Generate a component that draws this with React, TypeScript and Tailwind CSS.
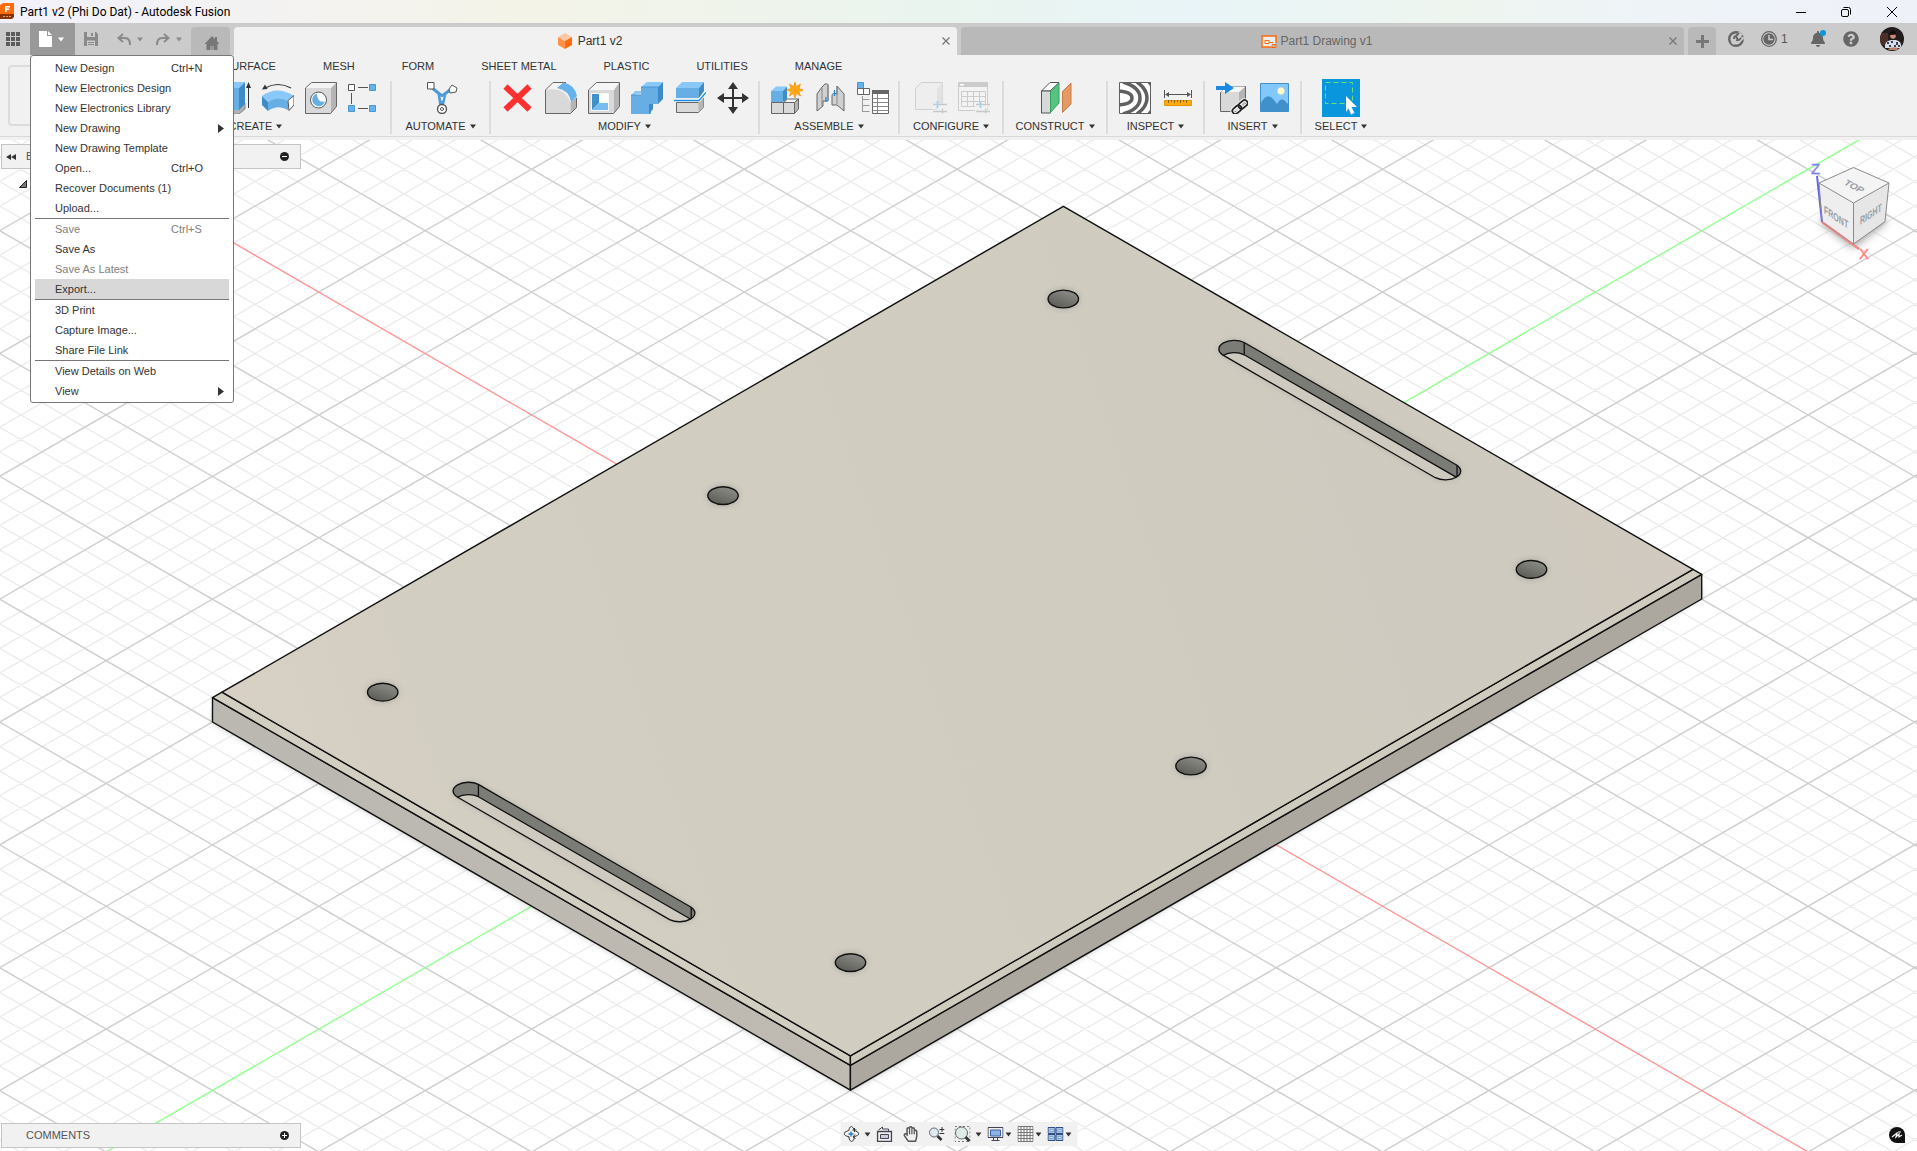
import React from 'react';
import { FaBell, FaQuestionCircle, FaRegHandPaper } from 'react-icons/fa';

type IconProps = { children: React.ReactNode; className?: string; size?: number };

const Icon: React.FC<IconProps> = ({ children, className = 'w-8 h-8', size = 32 }) => (
  <svg viewBox={`0 0 ${size} ${size}`} className={`${className} shrink-0`} fill="none" aria-hidden="true">
    {children}
  </svg>
);

const Caret: React.FC<{ className?: string }> = ({ className = 'text-[#333]' }) => (
  <svg viewBox="0 0 6 5" className={`w-[6px] h-[5px] shrink-0 ${className}`} aria-hidden="true">
    <path d="M0 .5h6L3 4.5z" fill="currentColor" />
  </svg>
);

/* ---------- ribbon icons ---------- */

const ExtrudeIcon = () => (
  <Icon>
    <path d="M2 26h18l6-5v6l-6 5H2z" fill="#b0b0b0" stroke="#888" />
    <path d="M2 6l6-6h18l-6 6z" fill="#88c8fb" />
    <path d="M2 6h18v22H2z" fill="#66aee4" />
    <path d="M20 6l6-6v22l-6 6z" fill="#3d8bc7" />
    <path d="M29.5 26V3" stroke="#333" />
    <path d="M29.5 0l2.500 6h-5z" fill="#333" />
  </Icon>
);

const SweepIcon = () => (
  <Icon>
    <path d="M3 6Q16-1 29 6" stroke="#333" strokeWidth="1.2" />
    <path d="M0 7.500l3-5 2.500 4.500z" fill="#333" />
    <path d="M0 14Q15 3 32 14l-6 5Q16 13 6 20z" fill="#88c8fb" />
    <path d="M0 14l6 6v9l-6-6z" fill="#3d8bc7" />
    <path d="M6 20q10-7 20-1v9q-10-6-20 1z" fill="#66aee4" />
    <path d="M26 18.500l6-5v9.500l-5 5.500z" fill="#fff" stroke="#555" />
  </Icon>
);

const HoleIcon = () => (
  <Icon>
    <path d="M.5 6l6-5.500h25L26 6z" fill="#f4f4f4" />
    <path d="M26 6l5.500-5.500v24L26 31.500z" fill="#b5b5b5" />
    <path d="M.5 6H26v25.500H.5z" fill="#d9d9d9" />
    <path d="M.5 6L6.500.5h25v24l-6 7H.5z" stroke="#666" />
    <circle cx="13.500" cy="18" r="8" fill="#fff" stroke="#555" />
    <path d="M12 11.500a6.500 6.500 0 1 0 8 8Q12 21 12 11.500z" fill="#66aee4" />
  </Icon>
);

const PatternIcon = () => (
  <Icon>
    <path d="M10 5.500h10M10 26.500h10M3.500 11v11" stroke="#555" />
    <path d="M.5 2.500h6v6h-6z" fill="#fff" stroke="#555" />
    <path d="M21.500 2.500h6v6h-6zM.5 23.500h6v6h-6zM21.500 23.500h6v6h-6z" fill="#66b2ea" stroke="#4a96d0" />
  </Icon>
);

const AutomateIcon = () => (
  <Icon>
    <path d="M5 5l11 9 8-6M13 12l2 13M19 12l-3 13" stroke="#4d9bd6" strokeWidth="3" />
    <path d="M13.500 13.500l2.500 8 2.500-8-2.500 1.500z" fill="#fff" stroke="#4d9bd6" />
    <path d="M1.500.5h6.500v6.500H1.500z" fill="#fff" stroke="#555" />
    <path d="M26 3l5 3-1 4-6 1-1-4z" fill="#fff" stroke="#555" />
    <circle cx="16" cy="27" r="4.500" fill="#fff" stroke="#555" strokeWidth="1.400" />
    <circle cx="16" cy="27" r="1.500" stroke="#555" />
  </Icon>
);

const DeleteIcon = () => (
  <Icon>
    <path d="M3.500 4.500l24 23M27.500 4.500l-24 23" stroke="#ff3030" strokeWidth="6" />
  </Icon>
);

const FilletIcon = () => (
  <Icon>
    <path d="M.5 8L8 .5h10L12 7z" fill="#f4f4f4" />
    <path d="M.5 31.500V8Q20 4 25.500 21v10.500z" fill="#d9d9d9" />
    <path d="M25.500 20l6-5v11l-6 5.500z" fill="#b5b5b5" />
    <path d="M.5 31.500V8L8 .5h13M.5 31.500h25l6-6V16" stroke="#666" />
    <path d="M12 6l6.500-5.500Q30 3 32 14l-6 6Q24 8 12 6z" fill="#66b2ea" />
  </Icon>
);

const ShellIcon = () => (
  <Icon>
    <path d="M.5 8l8-7.500h23L26 8z" fill="#f6f6f6" />
    <path d="M26 8l5.500-7.500v24L26 31.500z" fill="#b5b5b5" />
    <path d="M.5 8H26v23.500H.5z" fill="#d9d9d9" />
    <path d="M.5 8l8-7.500h23v24l-6 7H.5z" stroke="#666" />
    <path d="M3 11h18v18H3z" fill="#f6f6f6" />
    <path d="M4 12h7v9l-7 7z" fill="#4090cc" />
    <path d="M4 28l7-7h9v7z" fill="#78bdf2" />
    <path d="M11 12h9v9h-9z" fill="#fff" />
  </Icon>
);

const CombineIcon = () => (
  <Icon>
    <path d="M0 13.500L4 9h6V5l6-5h16l-5 5-11 5z" fill="#88c8fb" />
    <path d="M0 13h10V5h17v17h-7v10H0z" fill="#66aee4" />
    <path d="M27 5l5-5v17l-5 5zM18 32l4-5v-5h-4z" fill="#3d8bc7" />
    <path d="M10 5h17M0 13h10" stroke="#4a96d0" />
  </Icon>
);

const SplitIcon = () => (
  <Icon>
    <path d="M2 6l6-6h22l-5 6z" fill="#88c8fb" />
    <path d="M2 6h23v10H2z" fill="#66aee4" />
    <path d="M25 6l5-6v9l-5 7z" fill="#3d8bc7" />
    <path d="M2.500 20.500h22l5-5v10l-5 5h-22z" fill="#d9d9d9" stroke="#666" />
    <path d="M24.500 20.500l5-5v10l-5 5z" fill="#b5b5b5" />
    <path d="M0 18.500h25l7-8" stroke="#fff" strokeWidth="3" />
    <path d="M0 18.500h25l7-8" stroke="#1a8ae6" strokeWidth="1.300" />
  </Icon>
);

const MoveIcon = () => (
  <Icon>
    <path d="M16 5v22M5 16h22" stroke="#333" strokeWidth="2" />
    <path d="M16 0l5 7H11zM16 32l5-7H11zM0 16l7-5v10zM32 16l-7-5v10z" fill="#333" />
  </Icon>
);

const NewComponentIcon = () => (
  <Icon>
    <path d="M0 9l5-4.500h11V16H0z" fill="#88c8fb" />
    <path d="M0 9h12v11H0z" fill="#66aee4" />
    <path d="M12 9l4-4v12l-4 3z" fill="#3d8bc7" />
    <path d="M.5 20.500h12v11H.5zM12.500 20.500h11v11h-11z" fill="#d9d9d9" stroke="#666" />
    <path d="M12.500 20.500l4-3.500h11l-4 3.500z" fill="#f6f6f6" stroke="#666" />
    <path d="M23.500 20.500l4-3.500v10l-4 4.500z" fill="#b5b5b5" stroke="#666" />
    <path d="M24 0l1.500 4.500L29.500 2l-1.500 4.500 4.500 1.500-4.500 1.500 1.500 4.500-4-2.500L24 16l-1.500-4.500-4 2.500 1.500-4.500L15.500 8 20 6.500 18.500 2l4 2.500z" fill="#ffa813" stroke="#f08a00" strokeWidth=".6" />
  </Icon>
);

const JointIcon = () => (
  <Icon>
    <path d="M3 12l5-7 3-3q4-1 3 3v14H9v5l-6 5z" fill="#d0d0d0" stroke="#666" />
    <path d="M8 6v18M14 3v16" stroke="#888" />
    <path d="M30 12l-7-8v8q-5-2-5 2v9h5l7 6z" fill="#d0d0d0" stroke="#666" />
    <path d="M23 4v18" stroke="#888" />
    <path d="M12 15v5M20.500 8v6" stroke="#1a8ae6" strokeWidth="1.300" />
  </Icon>
);

const BomIcon = () => (
  <Icon>
    <path d="M.5.5h6v6h-6z" fill="#66b2ea" stroke="#4a96d0" />
    <path d="M.5 6.500h6v6h-6zM6.500 6.500h6v6h-6z" fill="#fff" stroke="#666" />
    <path d="M5.500 14v16M5.500 17.500h7M5.500 23.500h7M5.500 29.500h7" stroke="#999" />
    <path d="M15.500 8.500h16v23h-16z" fill="#fff" stroke="#666" />
    <path d="M15 8h17v4H15z" fill="#666" />
    <path d="M15.500 16.500h16M15.500 20.500h16M15.500 24.500h16M15.500 28.500h16M20.500 12v19" stroke="#888" />
  </Icon>
);

const Sliders = () => (
  <>
    <path d="M17 23.500h15M17 29.500h15" stroke="#f1f1f1" strokeWidth="4" />
    <path d="M18 22.500h14M18 29.500h14M27.500 26.500v5" stroke="#c8c8c8" strokeWidth="1.300" />
    <path d="M22.500 19v7" stroke="#a8d4f4" strokeWidth="2" />
  </>
);

const ConfigureIcon = () => (
  <Icon>
    <path d="M.5 6.500l6-6h21v21l-6 6h-21z" fill="#eee" stroke="#d0d0d0" />
    <path d="M22 6.500l5.500-6v21l-5.500 6z" fill="#e2e2e2" />
    <Sliders />
  </Icon>
);

const ConfigTableIcon = () => (
  <Icon>
    <path d="M.5.500h29v28h-29z" fill="#f3f3f3" stroke="#ccc" />
    <path d="M0 0h30v5H0z" fill="#ccc" />
    <path d="M2 2h4v1.500H2z" fill="#fff" />
    <path d="M3.500 9.500h24v15h-24zM3.500 14.500h24M3.500 19.500h24M9.500 9.500v15M15.500 9.500v15M21.500 9.500v15" stroke="#ccc" />
    <Sliders />
  </Icon>
);

const ConstructIcon = () => (
  <Icon>
    <path d="M1.500 9L10 .5h9L10 9z" fill="#fff" stroke="#555" />
    <path d="M1.500 9h9v22h-9z" fill="#d9d9d9" stroke="#555" />
    <path d="M10.500 10L19 1v20l-8.500 9.500z" fill="#58c280" stroke="#2ea35d" />
    <path d="M22.500 9.500L31 1v21l-8.500 8.500z" fill="#e59a66" stroke="#c77c48" />
  </Icon>
);

const ZebraIcon = () => (
  <Icon>
    <path d="M.5.5h31v31H.5z" fill="#fff" />
    <path d="M0 9q13 1 13 7t-13 7M4 0q17 5 17 16T4 32M18 0q10 7 10 16t-10 16M30 0q3 3 3 5M30 32q3-3 3-5" stroke="#606060" strokeWidth="3.500" />
    <path d="M.5.5h31v31H.5z" stroke="#606060" />
  </Icon>
);

const MeasureIcon = () => (
  <Icon>
    <path d="M2.500 8v8M29.500 8v8M4 12.500h24" stroke="#555" />
    <path d="M3 12.500l4-2.500v5zM29 12.500l-4-2.500v5z" fill="#555" />
    <path d="M2.500 18.500h27v5h-27z" fill="#ffab0f" stroke="#e69500" />
    <path d="M6.500 18v3M9.500 18v2M12.500 18v3M15.500 18v2M18.500 18v3M21.500 18v2M24.500 18v3" stroke="#8a6410" />
  </Icon>
);

const InsertIcon = () => (
  <Icon>
    <path d="M4.500 10.500l7-6h18v18l-6 7h-19z" fill="#d9d9d9" stroke="#666" />
    <path d="M5 10l6-5.500h18l-6 5.500z" fill="#f6f6f6" />
    <path d="M23 10.500l6-5.500v17l-6 7z" fill="#b5b5b5" />
    <path d="M0 4h9V0l9 6-9 6V8H0z" fill="#1a8ae6" />
    <g transform="rotate(-40 24 25)">
      <rect x="15" y="22" width="10" height="6" rx="3" stroke="#f1f1f1" strokeWidth="4" />
      <rect x="23" y="22" width="10" height="6" rx="3" stroke="#f1f1f1" strokeWidth="4" />
      <rect x="15" y="22" width="10" height="6" rx="3" stroke="#222" strokeWidth="1.700" />
      <rect x="23" y="22" width="10" height="6" rx="3" stroke="#222" strokeWidth="1.700" />
    </g>
  </Icon>
);

const ImageIcon = () => (
  <Icon>
    <path d="M1.500 1.500h28v28h-28z" fill="#83c8fd" stroke="#4090cc" />
    <circle cx="22" cy="9" r="3.500" fill="#fff9cf" stroke="#e8dfa0" strokeWidth=".5" />
    <path d="M2 21q6-12 13-3l3 4q4-7 8-3l3 3v7H2z" fill="#4090cc" />
  </Icon>
);

const SelectIcon = () => (
  <Icon className="w-[38px] h-[38px]" size={38}>
    <path d="M0 0h38v38H0z" fill="#0a96dc" />
    <path d="M3.500 3.500h27v21h-27z" stroke="#66e07a" strokeDasharray="5 3" />
    <path d="M24 17l11 11h-5.500l3 6-3.500 1.500-2.500-6L24 33z" fill="#fff" />
  </Icon>
);

/* ---------- data ---------- */

type Tool = { name: string; icon: React.ReactNode };
type Group = { label: string; width: string; tools: Tool[] };

const groups: Group[] = [
  {
    label: 'CREATE',
    width: 'w-[271px]',
    tools: [
      { name: 'Extrude', icon: <ExtrudeIcon /> },
      { name: 'Sweep', icon: <SweepIcon /> },
      { name: 'Hole', icon: <HoleIcon /> },
      { name: 'Pattern', icon: <PatternIcon /> },
    ],
  },
  { label: 'AUTOMATE', width: 'w-[99px]', tools: [{ name: 'Automate', icon: <AutomateIcon /> }] },
  {
    label: 'MODIFY',
    width: 'w-[269px]',
    tools: [
      { name: 'Delete', icon: <DeleteIcon /> },
      { name: 'Fillet', icon: <FilletIcon /> },
      { name: 'Shell', icon: <ShellIcon /> },
      { name: 'Combine', icon: <CombineIcon /> },
      { name: 'Split Body', icon: <SplitIcon /> },
      { name: 'Move', icon: <MoveIcon /> },
    ],
  },
  {
    label: 'ASSEMBLE',
    width: 'w-[140px]',
    tools: [
      { name: 'New Component', icon: <NewComponentIcon /> },
      { name: 'Joint', icon: <JointIcon /> },
      { name: 'Bill of Materials', icon: <BomIcon /> },
    ],
  },
  {
    label: 'CONFIGURE',
    width: 'w-[104px]',
    tools: [
      { name: 'Configure', icon: <ConfigureIcon /> },
      { name: 'Configuration Table', icon: <ConfigTableIcon /> },
    ],
  },
  { label: 'CONSTRUCT', width: 'w-[104px]', tools: [{ name: 'Offset Plane', icon: <ConstructIcon /> }] },
  {
    label: 'INSPECT',
    width: 'w-[97px]',
    tools: [
      { name: 'Zebra Analysis', icon: <ZebraIcon /> },
      { name: 'Measure', icon: <MeasureIcon /> },
    ],
  },
  {
    label: 'INSERT',
    width: 'w-[97px]',
    tools: [
      { name: 'Insert Derive', icon: <InsertIcon /> },
      { name: 'Canvas', icon: <ImageIcon /> },
    ],
  },
];

const ribbonTabs = ['SURFACE', 'MESH', 'FORM', 'SHEET METAL', 'PLASTIC', 'UTILITIES', 'MANAGE'];

type MenuEntry = { label: string; shortcut?: string; submenu?: boolean; disabled?: boolean; active?: boolean };

const menuSections: MenuEntry[][] = [
  [
    { label: 'New Design', shortcut: 'Ctrl+N' },
    { label: 'New Electronics Design' },
    { label: 'New Electronics Library' },
    { label: 'New Drawing', submenu: true },
    { label: 'New Drawing Template' },
    { label: 'Open...', shortcut: 'Ctrl+O' },
    { label: 'Recover Documents (1)' },
    { label: 'Upload...' },
  ],
  [
    { label: 'Save', shortcut: 'Ctrl+S', disabled: true },
    { label: 'Save As' },
    { label: 'Save As Latest', disabled: true },
    { label: 'Export...', active: true },
  ],
  [{ label: '3D Print' }, { label: 'Capture Image...' }, { label: 'Share File Link' }],
  [{ label: 'View Details on Web' }, { label: 'View', submenu: true }],
];

/* ---------- title bar ---------- */

const TitleBar = () => (
  <header className="h-[23px] shrink-0 flex items-center bg-[linear-gradient(90deg,#f2f1fa_0%,#f3f2f3_12%,#f4f3e8_27%,#eaf4ee_48%,#e8f4f7_62%,#eef5ef_76%,#eef3f8_86%,#eef2f8_100%)]">
    <svg viewBox="0 0 14 17" className="w-[14px] h-[17px] shrink-0" aria-hidden="true">
      <path d="M0 2l3-2h11v12H0z" fill="#ff6b0b" />
      <path d="M0 11h14v3l-2 2H0z" fill="#8a3304" />
      <path d="M5 9V3h5v1.500H6.800v1h2.500v1.500H6.800V9z" fill="#fff" />
      <path d="M3 13.500h8" stroke="#d9a07c" strokeDasharray="2 1" />
    </svg>
    <h1 className="ml-[6px] text-[12px] leading-4 text-black font-['Roboto','Noto_Sans',sans-serif]">
      Part1 v2 (Phi Do Dat) - Autodesk Fusion
    </h1>
    <div className="ml-auto pr-px flex h-full text-black">
      <button aria-label="Minimize" className="w-[45px] flex items-center justify-center">
        <Icon className="w-[10px] h-[10px]" size={10}><path d="M0 5.500h10" stroke="currentColor" /></Icon>
      </button>
      <button aria-label="Restore" className="w-[45px] flex items-center justify-center">
        <Icon className="w-[10px] h-[10px]" size={10}>
          <rect x=".5" y="2.500" width="7" height="7" rx="1.500" stroke="currentColor" />
          <path d="M2.500.5h5a2 2 0 0 1 2 2v5" stroke="currentColor" />
        </Icon>
      </button>
      <button aria-label="Close window" className="w-[48px] flex items-center justify-center">
        <Icon className="w-[10px] h-[10px]" size={10}><path d="M0 0l10 10M10 0L0 10" stroke="currentColor" /></Icon>
      </button>
    </div>
  </header>
);

/* ---------- document tabs ---------- */

const CloseX = () => (
  <Icon className="w-2 h-2" size={8}><path d="M.5.5l7 7M7.500.5l-7 7" stroke="#777" strokeWidth="1.300" /></Icon>
);

const TabBar = () => (
  <div className="h-8 shrink-0 bg-[#cbcbcb] flex items-stretch">
    <button aria-label="Data panel" className="w-[30px] pl-[6px] flex items-center">
      <Icon className="w-[14px] h-[14px]" size={14}>
        <path d="M0 0h4v4H0zM5 0h4v4H5zM10 0h4v4h-4zM0 5h4v4H0zM5 5h4v4H5zM10 5h4v4h-4zM0 10h4v4H0zM5 10h4v4H5zM10 10h4v4h-4z" fill="#5c5c5c" />
      </Icon>
    </button>
    <button aria-label="File" className="w-[45px] bg-[#999] pl-[9px] flex items-center gap-[6px]">
      <svg viewBox="0 0 13 16" className="w-[13px] h-4" aria-hidden="true">
        <path d="M0 0h8v5h5v11H0zM9 0l4 4H9z" fill="#fff" />
      </svg>
      <Caret className="text-white" />
    </button>
    <div className="w-[116px] pl-[9px] flex items-center text-[#8a8a8a]">
      <button aria-label="Save">
        <Icon className="w-[14px] h-[14px]" size={14}>
          <path d="M0 0h12l2 2v12H0z" fill="#8a8a8a" />
          <path d="M3 0h8v5H3zM3 8.500h8V14H3z" fill="#cbcbcb" />
          <path d="M7 1h2v3H7zM4 10h6v1H4zM4 12h6v1H4z" fill="#8a8a8a" />
        </Icon>
      </button>
      <button aria-label="Undo" className="ml-[19px]">
        <Icon className="w-[14px] h-[14px]" size={14}><path d="M6 2L1.500 6 6 10M2 6h6q5 0 5 7" stroke="currentColor" strokeWidth="2" /></Icon>
      </button>
      <Caret className="ml-[6px] text-[#8a8a8a]" />
      <button aria-label="Redo" className="ml-[13px]">
        <Icon className="w-[14px] h-[14px]" size={14}><path d="M8 2l4.500 4L8 10M12 6H6q-5 0-5 7" stroke="currentColor" strokeWidth="2" /></Icon>
      </button>
      <Caret className="ml-[6px] text-[#8a8a8a]" />
    </div>
    <button aria-label="Home" className="mt-1 w-[39px] shrink-0 rounded-t bg-[#b9b9b9] flex items-center justify-center pl-[3px] pt-[3px]">
      <Icon className="w-[14px] h-[14px]" size={14}>
        <path d="M7 0l3 3V1h2v4l2 2.500V8h-1.500v6H8.500v-4h-3v4h-4V8H0v-.5z" fill="#777" />
        <path d="M6 10h2v4H6z" fill="#999" />
      </Icon>
    </button>
    <div className="mt-1 ml-1 flex-1 rounded-t bg-[#f1f1f1] flex items-center pr-[7px]">
      <a href="#part1" className="flex-1 pl-1 flex items-center justify-center gap-[6px] text-[12px] text-[#333]">
        <svg viewBox="0 0 14 16" className="w-[14px] h-4" aria-hidden="true">
          <path d="M7 0l7 4-7 4-7-4z" fill="#fcc9a4" />
          <path d="M0 4l7 4v8l-7-4z" fill="#ff9248" />
          <path d="M14 4L7 8v8l7-4z" fill="#ff6b0b" />
        </svg>
        Part1 v2
      </a>
      <button aria-label="Close Part1 v2"><CloseX /></button>
    </div>
    <div className="mt-1 ml-1 flex-1 rounded-t bg-[#b9b9b9] flex items-center pr-[7px]">
      <a href="#drawing1" className="flex-1 pl-1 flex items-center justify-center gap-[3px] text-[12px] text-[#666]">
        <svg viewBox="0 0 16 13" className="w-4 h-[13px]" fill="none" aria-hidden="true">
          <path d="M10 12H1V1h14v7" fill="#eee" stroke="#ff6b0b" strokeWidth="1.500" />
          <path d="M4 5.500h4v2h4M4 5.500v3h4M11 9.500h4v3h-4z" stroke="#ff6b0b" />
        </svg>
        Part1 Drawing v1
      </a>
      <button aria-label="Close Part1 Drawing v1"><CloseX /></button>
    </div>
    <button aria-label="New tab" className="mt-1 ml-1 w-7 rounded-t bg-[#b9b9b9] flex items-center justify-center">
      <Icon className="w-[13px] h-[13px]" size={13}><path d="M6.500 0v13M0 6.500h13" stroke="#777" strokeWidth="3" /></Icon>
    </button>
    <div className="w-[201px] flex items-center pl-3 text-[#666]">
      <button aria-label="Extensions">
        <Icon className="w-4 h-4" size={16}>
          <circle cx="8" cy="8" r="6.800" stroke="currentColor" strokeWidth="2.400" />
          <path d="M3 12l3-3q-1-3 1-4l4-4.500 4 3-3 3 1 .5 2.500-2 .5 3-4 3q-2 1-4 0l-2 3z" fill="#cbcbcb" />
          <path d="M6 8q0-3 2-3l3-3M8 9q3 1 5-2M8 6l2 2" stroke="currentColor" strokeWidth="1.800" />
        </Icon>
      </button>
      <button aria-label="Job status" className="ml-[17px] flex items-center gap-1 text-[12px] text-[#555]">
        <Icon className="w-4 h-4" size={16}>
          <circle cx="8" cy="8" r="7.300" stroke="#666" strokeWidth="1.300" />
          <circle cx="8" cy="8" r="5.700" fill="#666" />
          <path d="M8 4v4.500h4" stroke="#cbcbcb" strokeWidth="1.500" />
        </Icon>
        1
      </button>
      <button aria-label="Notifications" className="relative ml-[23px]">
        <FaBell className="w-[14px] h-4" />
        <span className="absolute -top-px -right-px w-[6px] h-[6px] rounded-full bg-[#0a96dc]" />
      </button>
      <button aria-label="Help" className="ml-[18px]">
        <FaQuestionCircle className="w-4 h-4" />
      </button>
      <button aria-label="Account" className="ml-[21px]">
        <svg viewBox="0 0 24 24" className="w-6 h-6" aria-hidden="true">
          <defs><clipPath id="avatar"><circle cx="12" cy="12" r="12" /></clipPath></defs>
          <g clipPath="url(#avatar)">
            <path d="M0 0h24v24H0z" fill="#231c1c" />
            <path d="M0 6h8v12H0z" fill="#4a3028" />
            <path d="M5 21q-1-7 6-8h5q6 1 5 8z" fill="#d8dce4" />
            <path d="M7 15h2v2H7zM11 14h2v2h-2zM16 15h2v3h-2zM9 18h2v2H9zM14 18h2v2h-2zM18 18h2v2h-2z" fill="#39425c" />
            <circle cx="13" cy="9" r="2.800" fill="#c48d75" />
            <path d="M10 8q0-5 3-4.500t3 4z" fill="#100c0c" />
            <path d="M8 22q5-3 10-1l-1 2H9z" fill="#bd8068" />
          </g>
        </svg>
      </button>
    </div>
  </div>
);

/* ---------- ribbon ---------- */

const GroupLabel: React.FC<{ label: string }> = ({ label }) => (
  <button className="flex items-center gap-1 text-[11px] leading-4 text-[#333]">
    {label}
    <Caret />
  </button>
);

const Ribbon = () => (
  <div className="h-[85px] shrink-0 bg-[#f1f1f1] pb-[3px]">
    <div className="h-full flex border-b border-[#d9d9d9]">
      <div className="w-[121px] shrink-0 py-[10px] pl-2 pr-3">
        <button aria-label="Workspace" className="w-full h-[61px] rounded border-2 border-[#dcdcdc]" />
      </div>
      <div className="flex-1">
        <nav className="h-[22px] flex items-center gap-[47px] pl-[103px] text-[11px] text-[#333]">
          {ribbonTabs.map((tab) => (
            <button key={tab}>{tab}</button>
          ))}
        </nav>
        <div className="flex pt-1">
          {groups.map((group) => (
            <section
              key={group.label}
              className={`${group.width} h-[53px] shrink-0 border-r-2 border-[#dcdcdc] flex flex-col items-center justify-between`}
            >
              <div className={`h-[34px] flex items-center gap-[11px] ${group.label === 'CREATE' ? 'self-end pr-[10px]' : 'pl-[2px]'}`}>
                {group.tools.map((tool) => (
                  <button key={tool.name} aria-label={tool.name}>{tool.icon}</button>
                ))}
              </div>
              <GroupLabel label={group.label} />
            </section>
          ))}
          <section className="w-[78px] h-[53px] shrink-0 flex flex-col items-center justify-between">
            <div className="h-[34px] flex items-center">
              <button aria-label="Select"><SelectIcon /></button>
            </div>
            <GroupLabel label="SELECT" />
          </section>
        </div>
      </div>
    </div>
  </div>
);

/* ---------- file menu ---------- */

const FileMenu = () => (
  <div role="menu" className="absolute z-10 left-[30px] top-[55px] w-[204px] rounded-[3px] border border-[#777] bg-white px-1 pt-[2px] pb-px text-[11px]">
    {menuSections.map((section, i) => (
      <div key={i} className={i > 0 ? 'border-t border-[#777]' : ''}>
        {section.map((entry) => (
          <button
            key={entry.label}
            role="menuitem"
            disabled={entry.disabled}
            className={`w-full h-5 flex items-center pl-5 text-left whitespace-nowrap ${entry.disabled ? 'text-[#808080]' : 'text-[#333]'} ${entry.active ? 'bg-[#d8d8d8]' : ''}`}
          >
            <span className="flex-1">{entry.label}</span>
            {entry.shortcut && <span className="w-[58px]">{entry.shortcut}</span>}
            {entry.submenu && (
              <svg viewBox="0 0 6 9" className="w-[6px] h-[9px] mr-[5px]" aria-hidden="true">
                <path d="M0 0l6 4.500L0 9z" fill="#333" />
              </svg>
            )}
          </button>
        ))}
      </div>
    ))}
  </div>
);

/* ---------- 3D scene ---------- */

// isometric ground grid, every fifth line is a major one
const ORIGIN_X = 957.1;
const ORIGIN_Y = 660.6;
const STEP = 24.567;
const SLOPE = 0.57735;
const gridLines = Array.from({ length: 97 }, (_, i) => i - 48);

const gridPath = (ks: number[]) =>
  ks
    .map((k) => {
      const y = ORIGIN_Y + k * STEP;
      const dy = 1000 * SLOPE;
      return `M${ORIGIN_X - 1000} ${y - dy}L${ORIGIN_X + 1000} ${y + dy}M${ORIGIN_X - 1000} ${y + dy}L${ORIGIN_X + 1000} ${y - dy}`;
    })
    .join('');

const minorGrid = gridPath(gridLines.filter((k) => k % 5 !== 0));
const majorGrid = gridPath(gridLines.filter((k) => k % 5 === 0 && k !== 0));

const holes = [
  [1063.3, 299],
  [723, 495.6],
  [382.7, 692.2],
  [1531.5, 569.4],
  [1191, 766],
  [850.5, 962.6],
];

const slotPath = (x: number, y: number) =>
  `M${x + 10.8} ${y - 6.2}l212.8 122.8a15.3 8.8 0 0 1 -21.6 12.4l-212.8 -122.8a15.3 8.8 0 0 1 21.6 -12.4z`;

const Slot: React.FC<{ id: string; x: number; y: number }> = ({ id, x, y }) => (
  <g>
    <clipPath id={id}><path d={slotPath(x, y)} /></clipPath>
    <path d={slotPath(x, y)} fill="#777" opacity=".35" filter="url(#soft)" />
    <g clipPath={`url(#${id})`}>
      <path d={slotPath(x, y)} fill="#7c7c77" />
      <path d={slotPath(x, y + 12.3)} fill="#cfcabf" stroke="#111" strokeWidth="1.3" />
      <path d={`M${x + 10.8} ${y - 7}v13M${x + 223.6} ${y + 116}v13`} stroke="#111" strokeWidth="1.3" />
    </g>
    <path d={slotPath(x, y)} fill="none" stroke="#111" strokeWidth="1.3" />
  </g>
);

const Scene = () => (
  <svg viewBox="0 140 1917 1011" preserveAspectRatio="xMidYMid slice" className="absolute inset-0 w-full h-full" role="img" aria-label="Part1 model">
    <defs>
      <linearGradient id="top" x1="0" y1="0.6" x2="1" y2="0.4">
        <stop offset="0" stopColor="#d8d0c4" />
        <stop offset=".15" stopColor="#d3cec2" />
        <stop offset=".6" stopColor="#d0ccc0" />
        <stop offset=".9" stopColor="#cfcabf" />
        <stop offset="1" stopColor="#d1c9bf" />
      </linearGradient>
      <linearGradient id="hole" x1="0" y1="1" x2=".6" y2="0">
        <stop offset="0" stopColor="#55554f" />
        <stop offset="1" stopColor="#8b8b86" />
      </linearGradient>
      <linearGradient id="front" x1="0" y1="0" x2="1" y2="1">
        <stop offset="0" stopColor="#bab8b1" />
        <stop offset="1" stopColor="#bfbab2" />
      </linearGradient>
      <filter id="soft" x="-20%" y="-20%" width="140%" height="140%"><feGaussianBlur stdDeviation="3" /></filter>
    </defs>
    <path d="M0 140h1917v1011H0z" fill="#fff" />
    <path d={minorGrid} stroke="#ebebeb" strokeWidth="1.3" />
    <path d={majorGrid} stroke="#cecece" strokeWidth="1.4" />
    <path d={`M-42.9 ${ORIGIN_Y - 577.35}L1957.1 ${ORIGIN_Y + 577.35}`} stroke="#ff9494" strokeWidth="1.4" />
    <path d={`M-42.9 ${ORIGIN_Y + 577.35}L1957.1 ${ORIGIN_Y - 577.35}`} stroke="#90ff90" strokeWidth="1.4" />

    <path d="M213 708L851 1076l850-490v12L851 1091 213 723z" fill="#777" opacity=".4" filter="url(#soft)" />
    <g stroke="#111" strokeWidth="1.4" strokeLinejoin="round">
      <path d="M212.5 697.6L850.4 1065.4v24.7L212.5 722z" fill="url(#front)" />
      <path d="M850.4 1065.4L1701.7 574.400v24.600L850.4 1090.1z" fill="#aca89f" />
      <path d="M222 692.2L212.5 697.600l637.900 367.800V1055.800z" fill="#d3cec2" />
      <path d="M1693 569.300l8.700 5.100-851.300 491V1055.800z" fill="#d0cbbf" />
      <path d="M1063.400 206.400L1693 569.300 850.400 1055.800 222 692.200z" fill="url(#top)" />
    </g>
    {holes.map(([x, y]) => (
      <g key={x}>
        <ellipse cx={x} cy={y} rx="16" ry="10" fill="#777" opacity=".4" filter="url(#soft)" />
        <ellipse cx={x} cy={y} rx="15.2" ry="8.9" fill="url(#hole)" stroke="#111" strokeWidth="1.4" />
      </g>
    ))}
    <Slot id="slot-a" x={1233.4} y={348.7} />
    <Slot id="slot-b" x={467.6} y={790.6} />
  </svg>
);

const ViewCube = () => (
  <svg viewBox="0 0 117 110" className="absolute top-5 right-0 w-[117px] h-[110px]" fill="none" role="img" aria-label="View cube">
    <defs>
      <filter id="cubeShadow" x="-30%" y="-50%" width="160%" height="200%"><feGaussianBlur stdDeviation="4" /></filter>
    </defs>
    <path d="M20 62l33 26 34-26-10-10H30z" fill="#666" opacity=".6" filter="url(#cubeShadow)" />
    <path d="M19 23L53.5 7.500 89 23 53.500 43z" fill="#f4f4f4" />
    <path d="M19 23l34.500 20v41L22 62z" fill="#eee" />
    <path d="M89 23L53.500 43v41L85 61.500z" fill="#e6e6e6" />
    <path d="M17 16l5 46" stroke="#6464e6" strokeWidth="2" />
    <path d="M22 62l37 27" stroke="#f08a8a" strokeWidth="2.400" />
    <path d="M19 23L53.500 7.500 89 23 53.500 43zM22 62L19 23M53.500 84V43M89 23l-4 38.500L53.500 84" stroke="#8a8a8a" />
    <path d="M22 62l31.500 22" stroke="#8a8a8a" strokeWidth=".6" />
    <g fontFamily="Liberation Sans, sans-serif" fontSize="11" fontWeight="bold" fill="#999da6">
      <text transform="matrix(.8 .42 -.6 .6 43 24)">TOP</text>
      <text transform="matrix(.64 .42 0 1 24 53)">FRONT</text>
      <text transform="matrix(.64 -.42 0 1 60 65)">RIGHT</text>
    </g>
    <g fontFamily="Liberation Sans, sans-serif" fontSize="15" strokeWidth=".4">
      <text x="11" y="14" fill="#8080f4" stroke="#8080f4">Z</text>
      <text x="59" y="99" fill="#ff8080" stroke="#ff8080">X</text>
    </g>
  </svg>
);

/* ---------- panels over the canvas ---------- */

const PanelBar: React.FC<{ title: string; open?: boolean }> = ({ title, open }) => (
  <div className="w-[300px] h-[25px] border border-[#c4c4c4] bg-[#f1f1f1] flex items-center pr-[11px] text-[11px] text-[#555]">
    <span className="w-6 pl-1">
      {open && (
        <svg viewBox="0 0 10 6" className="w-[10px] h-[6px]" aria-hidden="true">
          <path d="M5 0v6L0 3zM10 0v6L5 3z" fill="#333" />
        </svg>
      )}
    </span>
    <span className="flex-1">{title}</span>
    <button aria-label={open ? `Collapse ${title}` : `Expand ${title}`}>
      <Icon className="w-[9px] h-[9px]" size={9}>
        <circle cx="4.500" cy="4.500" r="4.500" fill="#222" />
        <path d={open ? 'M2 4.500h5' : 'M2 4.500h5M4.500 2v5'} stroke="#fff" />
      </Icon>
    </button>
  </div>
);

const navItems: { name: string; caret?: 'wide' | 'tight'; icon: React.ReactNode }[] = [
  {
    name: 'Orbit',
    caret: 'wide',
    icon: (
      <>
        <path d="M5 4.500Q0 6 .5 8T6 11M12 5q4 1.500 3.500 3T10 11" stroke="#444" />
        <path d="M5 5q1-5 3-4.500T11 5M5 10.500q1 5 3 5t3-4" stroke="#444" />
        <path d="M5 8h5M7.500 5.500v5" stroke="#1a7ad0" strokeWidth="1.300" />
        <path d="M9 4h4M11 2v4M11.500 8.500l-2 2.500 2.500 1.500" stroke="#333" />
      </>
    ),
  },
  {
    name: 'Look At',
    icon: (
      <>
        <path d="M1 5.500h14v10H1z" stroke="#445" strokeWidth="1.400" />
        <path d="M4 8.500h8v4H4z" fill="#ccd" stroke="#445" />
        <path d="M2 4l4-3v2h6v2" stroke="#445" />
      </>
    ),
  },
  { name: 'Pan', icon: null },
  {
    name: 'Zoom',
    icon: (
      <>
        <circle cx="5.500" cy="6.500" r="4.500" fill="#dcebee" stroke="#667" />
        <path d="M9 10l4 4" stroke="#333" strokeWidth="2.600" />
        <path d="M11 3.500h5M13.500 1v5M11 7.500h5" stroke="#333" />
      </>
    ),
  },
  {
    name: 'Fit',
    caret: 'wide',
    icon: (
      <>
        <path d="M.5.5h15v15H.5z" stroke="#777" strokeDasharray="2 2" />
        <circle cx="7" cy="7" r="6" fill="#dcebe6" stroke="#667" />
        <path d="M11 11l4 4" stroke="#333" strokeWidth="2.800" />
      </>
    ),
  },
  {
    name: 'Display Settings',
    caret: 'tight',
    icon: (
      <>
        <path d="M.5 1.500h15v10H.5z" fill="#eee" stroke="#445" />
        <path d="M3 4h10v6H3z" fill="#8db4e8" stroke="#3c62a0" />
        <path d="M6 12v2M10 12v2M4 14.500h8" stroke="#445" />
      </>
    ),
  },
  {
    name: 'Grid and Snaps',
    caret: 'tight',
    icon: <path d="M.5.5h15v15H.5zM3.500 0v16M6.500 0v16M9.500 0v16M12.500 0v16M0 3.500h16M0 6.500h16M0 9.500h16M0 12.500h16" fill="#f8f8f8" stroke="#777" />,
  },
  {
    name: 'Viewports',
    caret: 'tight',
    icon: (
      <>
        <path d="M.5 1.500h7v6h-7zM8.500 1.500h7v6h-7zM.5 8.500h7v6h-7zM8.500 8.500h7v6h-7z" fill="#a8c4ea" stroke="#2f4f80" />
        <path d="M2.500 3.500h3v2h-3zM10.500 3.500h3v2h-3zM2.500 10.500h3v2h-3zM10.500 10.500h3v2h-3z" fill="#dfe9f7" stroke="#6f8fc0" strokeWidth=".7" />
      </>
    ),
  },
];

const NavBar = () => (
  <div className="absolute bottom-[5px] left-1/2 -translate-x-1/2 h-6 pl-[3px] pr-[6px] bg-[#f1f1f1] flex items-center gap-[6px]">
    {navItems.map(({ name, caret, icon }) => (
      <button
        key={name}
        aria-label={name}
        className={`flex items-center ${caret === 'wide' ? 'gap-[5px]' : 'gap-[2px]'} ${caret ? '' : 'w-5'}`}
      >
        {icon ? <Icon className="w-4 h-4" size={16}>{icon}</Icon> : <FaRegHandPaper className="w-4 h-4 text-[#555]" />}
        {caret && <Caret />}
      </button>
    ))}
  </div>
);

const Viewport = () => (
  <main className="relative flex-1 min-h-0 overflow-hidden bg-white">
    <Scene />
    <ViewCube />
    <div className="absolute left-px top-1">
      <PanelBar title="BROWSER" open />
      <svg viewBox="0 0 8 8" className="w-2 h-2 mt-[11px] ml-[18px]" aria-hidden="true">
        <path d="M7.500.5v7H.5z" fill="#777" stroke="#222" />
      </svg>
    </div>
    <div className="absolute left-px bottom-[3px]">
      <PanelBar title="COMMENTS" />
    </div>
    <NavBar />
    <button aria-label="Assistant" className="absolute right-3 bottom-2">
      <Icon className="w-4 h-4" size={16}>
        <circle cx="8" cy="8" r="8" fill="#111" />
        <path d="M8 8h8v8H8z" fill="#111" />
        <path d="M3 10l5-4-1 4 3-3v3l3-2M9 5h3" stroke="#fff" strokeWidth="1.200" />
      </Icon>
    </button>
  </main>
);

export default function App() {
  return (
    <div className="relative h-screen flex flex-col overflow-hidden font-['Liberation_Sans',Arial,sans-serif]">
      <TitleBar />
      <TabBar />
      <Ribbon />
      <Viewport />
      <FileMenu />
    </div>
  );
}
